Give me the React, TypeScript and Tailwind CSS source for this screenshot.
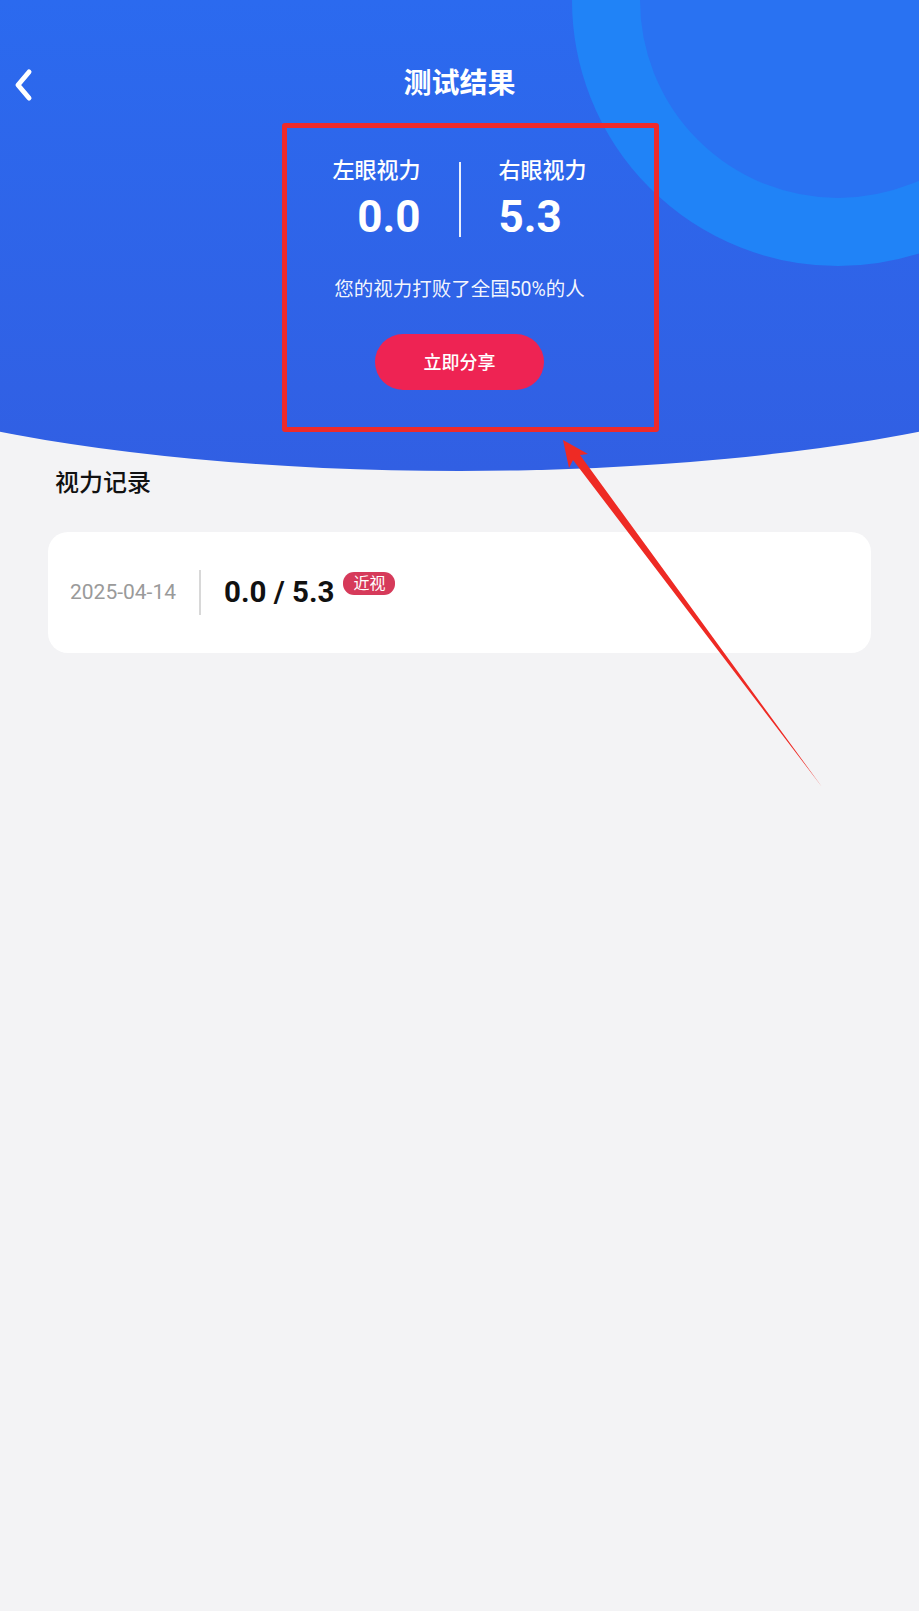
const font = "font-['Roboto','Noto_Sans_CJK_SC',sans-serif]";

function BackIcon() {
  return (
    <svg width="22" height="34" viewBox="0 0 22 34" fill="none">
      <polyline
        points="16,4 5,17 16,30"
        stroke="white"
        strokeWidth="5"
        strokeLinecap="round"
        strokeLinejoin="round"
      />
    </svg>
  );
}

// red annotation arrow drawn over the page
function Arrow() {
  return (
    <svg
      className="absolute left-0 top-0 pointer-events-none"
      width="919"
      height="820"
      viewBox="0 0 919 820"
    >
      <polygon
        points="563,440 588,454 580,455 822,787 573,460 569,468"
        fill="#ee2a24"
      />
    </svg>
  );
}

export default function App() {
  return (
    <div className={`relative min-h-screen overflow-hidden bg-[#f3f3f5] ${font}`}>
      {/* blue header with curved bottom */}
      <div className="relative mx-[-240px] h-[471px] overflow-hidden rounded-b-[50%_160px] bg-gradient-to-b from-[#2b6aef] to-[#315fe3] px-[240px]">
        <div className="absolute left-[812px] top-[-266px] h-[532px] w-[532px] rounded-full border-[68px] border-[#2083f7] bg-[#2972f2]" />

        <div className="relative pt-[59px]">
          <div className="grid h-[50px] grid-cols-[1fr_auto_1fr] items-center">
            <div className="pl-[13px] pt-[1px]">
              <BackIcon />
            </div>
            <h1 className="text-[28px] font-bold leading-[50px] text-white">测试结果</h1>
            <div />
          </div>

          <div className="mt-[48px] flex justify-center gap-[38px] text-white">
            <div className="flex flex-col items-end">
              <div className="text-[22px] font-medium leading-[28px]">左眼视力</div>
              <div className="mt-[10px] text-[44px] font-bold leading-[44px]">0.0</div>
            </div>
            <div className="mt-[5px] h-[75px] w-[2px] bg-white/90" />
            <div className="flex flex-col items-start">
              <div className="text-[22px] font-medium leading-[28px]">右眼视力</div>
              <div className="mt-[10px] text-[44px] font-bold leading-[44px]">5.3</div>
            </div>
          </div>

          <p className="mt-[38px] text-center text-[19.5px] leading-[26px] text-white/95">
            您的视力打败了全国50%的人
          </p>

          <div className="mt-[31px] flex justify-center">
            <button
              type="button"
              className="h-[56px] w-[169px] rounded-full bg-[#ee2353] text-[18px] font-medium text-white"
            >
              立即分享
            </button>
          </div>
        </div>
      </div>

      {/* records */}
      <h2 className="ml-[55px] text-[24px] font-medium leading-[24px] text-[#111]">视力记录</h2>

      <div className="mx-[48px] mt-[37px] flex h-[121px] items-center rounded-[20px] bg-white pl-[22px]">
        <span className="text-[21px] text-[#9a9a9a]">2025-04-14</span>
        <div className="mx-[23px] h-[45px] w-[2px] bg-[#d8d8d8]" />
        <span className="text-[29.5px] font-bold text-[#111]">0.0 / 5.3</span>
        <span className="mb-[18px] ml-[9px] h-[23px] rounded-[11px] bg-[#d63a5a] px-[10px] text-[16px] leading-[23px] text-white">
          近视
        </span>
      </div>

      {/* red annotation frame */}
      <div className="pointer-events-none absolute left-[282px] top-[123px] h-[309px] w-[377px] rounded-[3px] border-[5px] border-[#ee2a2a]" />
      <Arrow />
    </div>
  );
}
